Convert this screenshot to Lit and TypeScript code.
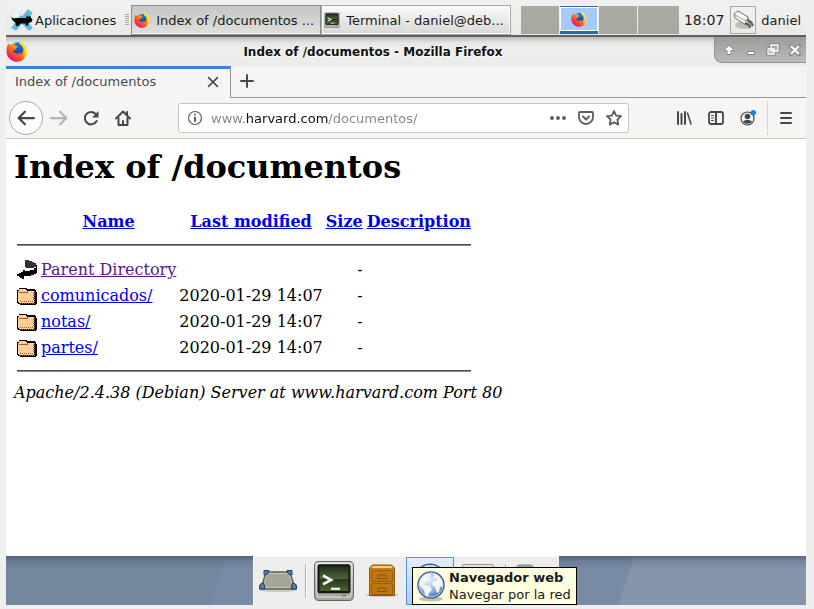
import { LitElement, html, svg, css } from "lit";
import { customElement, property } from "lit/decorators.js";
import { styleMap } from "lit/directives/style-map.js";

const firefoxIcon = (size: number, id: string) => html`
  <svg width=${size} height=${size} viewBox="0 0 24 24" aria-hidden="true">
    <defs>
      <linearGradient id=${"f" + id} x1="0.85" y1="0.1" x2="0.2" y2="0.9">
        <stop offset="0" stop-color="#ffe226" />
        <stop offset="0.4" stop-color="#ff9a16" />
        <stop offset="0.7" stop-color="#ff4b2b" />
        <stop offset="1" stop-color="#e3157e" />
      </linearGradient>
      <linearGradient id=${"g" + id} x1="0" y1="0" x2="0" y2="1">
        <stop offset="0" stop-color="#0a8bea" />
        <stop offset="1" stop-color="#332a85" />
      </linearGradient>
    </defs>
    <circle cx="12.5" cy="10.8" r="8.3" fill=${`url(#g${id})`} />
    <path fill=${`url(#f${id})`}
      d="M3 3.2C3.200 4.300 3.600 5 4.300 5.500 5.200 5 6.500 5 7.500 5.200 8.500 4.200 9.700 3.500 11 3.400 10.200 4 9.700 4.700 9.600 5.700c1 1 2.900.8 3.400 1.300-.1.900-1.900 1.500-2.400 2.100-.2.800.1 1.500-.5 1.900-1 .1-1.800-.2-2.600.3.500 2.700 3.500 4.400 6.200 3.300 1-.4 1.700-.8 2.800-.4-.7 1.200-2 2.100-3.400 2.200 3.700.1 6.200-3 5.700-6.600C18.500 7.500 17.300 5.700 15.500 5c-1-.5-.2-3.500.9-4.600.8 1.800 2.500 2.400 3.900 4.400 2.700 2.800 3.500 6.900 2.300 10.700C21 20.500 16.800 23.800 12 23.800 5.800 23.800.6 18.800.5 12.500.4 8.800 1.300 5.500 3 3.200z" />
    <path fill="#ffe54a" opacity="0.8" d="M16.400.4c.8 1.800 2.500 2.400 3.900 4.400 2.700 2.800 3.500 6.900 2.300 10.700-.7 2-1.900 3.900-3.500 5.400 1.900-4 2-8.400.2-11.900C18.500 7.500 17.300 5.700 15.500 5c-1-.5-.2-3.500.9-4.600z" />
  </svg>`;

const xfceIcon = html`
  <svg width="24" height="24" viewBox="0 0 24 24" aria-hidden="true">
    <path d="M6 1l6 7 6-7 5 4-6 7 6 8-4 3-7-7-6 7-5-3 6-8-6-7z" fill="#5fb4e0" stroke="#b9e0f4" />
    <path d="M6 1l5 6-5 5-5-7z" fill="#eaf5fb" />
    <path d="M1.500 8.500C3 11 4 10.500 6 10h10l1-2.500 1.500 1.500 2-1.500.5 2.500 1.500 1.500-1 2.500-3 1-.5 2.500h-2l-.5-2h-5l-2 2.500H6l-.5-3-2-2C2 12 1.500 10.500 1.500 8.500z" fill="#050505" />
  </svg>`;

const terminalIcon = (size: number, id: string) => html`
  <svg width=${size} height=${size} viewBox="0 0 40 36" preserveAspectRatio="none" aria-hidden="true">
    <defs>
      <linearGradient id=${"t" + id} x1="0" y1="0" x2="0" y2="1">
        <stop offset="0" stop-color="#202d1c" />
        <stop offset="0.5" stop-color="#4b6436" />
        <stop offset="0.52" stop-color="#26371f" />
        <stop offset="1" stop-color="#4d6632" />
      </linearGradient>
      <linearGradient id=${"b" + id} x1="0" y1="0" x2="0" y2="1">
        <stop offset="0" stop-color="#dadad7" />
        <stop offset="1" stop-color="#a2a29d" />
      </linearGradient>
    </defs>
    <rect x="0.500" y="0.500" width="39" height="35" rx="4" fill=${`url(#b${id})`} stroke="#686864" />
    <rect x="3" y="2.500" width="34" height="30" rx="2" fill="none" stroke="#efefed" opacity="0.7" />
    <rect x="4.500" y="4" width="31" height="24" rx="1" fill=${`url(#t${id})`} stroke="#151713" stroke-width="2" />
    <path d="M9 13l8 4-8 4" fill="none" stroke="#f4f6ee" stroke-width="2.500" />
    <path d="M17 25h9" stroke="#f4f6ee" stroke-width="2" />
    <path d="M28 31h4" stroke="#6d9a40" stroke-width="2" />
  </svg>`;

const globeIcon = (width: number, height: number, id: string) => html`
  <svg width=${width} height=${height} viewBox="0 0 30 32" aria-hidden="true">
    <defs>
      <radialGradient id=${id} cx="0.4" cy="0.3" r="0.75">
        <stop offset="0" stop-color="#e9f1fa" />
        <stop offset="0.6" stop-color="#8fb3dc" />
        <stop offset="1" stop-color="#3e6ba8" />
      </radialGradient>
    </defs>
    <ellipse cx="15" cy="29" rx="12" ry="2.500" fill="#777" opacity="0.45" />
    <circle cx="15" cy="15" r="13" fill=${`url(#${id})`} stroke="#405f9a" stroke-width="1.500" />
    <path d="M4 10l4-5 5-2 2 2-2 2 2 2-4 1-1 3-3 1 3 1 4 1 2 4-3 3-1 4-3-2-1-5-3-3-2-3zM18 3l5 3 3 5 1 5-3 1-1 5-2 1-2-6-3-2 1-4 4-1-2-2-3 1 2-3z" fill="#f4f5ef" />
    <circle cx="15" cy="15" r="12" fill="none" stroke="#d8e6f6" opacity="0.8" />
  </svg>`;

const desktopIcon = html`
  <svg width="40" height="24" viewBox="0 0 40 24" aria-hidden="true">
    <ellipse cx="20" cy="21" rx="19" ry="2" fill="#888" opacity="0.35" />
    <path d="M8 3h24l5 17H3z" fill="#a5a896" stroke="#5d6155" stroke-width="1.500" />
    <path d="M9 4.500h22l4 14H5z" fill="none" stroke="#c5c8b8" />
    <path d="M6 1.500h5l-1 3-3 2-1-1zM34 1.500h-5l1 3 3 2 1-1zM2.500 15l3-1 1 3v3h-5v-3zM37.500 15l-3-1-1 3v3h5v-3z" fill="#5479a8" stroke="#233f68" />
  </svg>`;

const cabinetIcon = html`
  <svg width="32" height="34" viewBox="0 0 32 34" aria-hidden="true">
    <ellipse cx="16" cy="31" rx="16" ry="2" fill="#777" opacity="0.35" />
    <path d="M3.500 31.500V4l3-3h19l3 3v27.500z" fill="#c78013" stroke="#8a5a12" />
    <path d="M5 4l2-2h18l2 2z" fill="#f0cf8e" />
    <rect x="5.500" y="6.500" width="21" height="11" rx="1" fill="#bd7610" stroke="#915c0d" />
    <rect x="5.500" y="19.500" width="21" height="11" rx="1" fill="#bd7610" stroke="#915c0d" />
    <path d="M12 14v-3h8v3M11 14.500h10M12 27v-3h8v3M11 27.500h10" fill="none" stroke="#8a560b" />
  </svg>`;

const finderIcon = html`
  <svg width="32" height="34" viewBox="0 0 32 34" aria-hidden="true">
    <rect x="0.500" y="0.500" width="31" height="32" rx="1" fill="#d2d2cf" stroke="#999995" />
    <path d="M2 2h28" stroke="#f5f5f3" />
  </svg>`;

const folderDockIcon = html`
  <svg width="38" height="34" viewBox="0 0 38 34" aria-hidden="true">
    <path d="M1.500 33V3l2-2h13l2 2v3h16v27z" fill="#a3a3a0" stroke="#858582" />
  </svg>`;

const plugIcon = html`
  <svg width="22" height="24" viewBox="0 0 22 24" aria-hidden="true">
    <ellipse cx="12" cy="17" rx="9" ry="4" fill="#888" opacity="0.45" />
    <path d="M2 6l4-3 10 6 1 6-3 2L3 10z" fill="#f7f7f4" stroke="#74746e" />
    <path d="M3 7l11 6 2-4M14 13v4" fill="none" stroke="#a9a9a3" />
    <path d="M15 12l4 2 2 4M13 15l4 2 1 3" fill="none" stroke="#595955" stroke-width="2" />
  </svg>`;

const stroke = (size: number, body: unknown) => html`
  <svg width=${size} height=${size} viewBox="0 0 16 16" fill="none" stroke="currentColor" stroke-width="2"
    stroke-linecap="round" stroke-linejoin="round" aria-hidden="true">${body}</svg>`;

const icons = {
  back: stroke(18, svg`<path d="M15 8H2M7 2.500L1.500 8 7 13.500" />`),
  forward: stroke(18, svg`<path d="M1 8h13M9 2.500L14.500 8 9 13.500" />`),
  reload: stroke(16, svg`<path d="M13.600 11A6.200 6.200 0 1 1 12.500 3.800" /><path d="M15.500 1v6.500H9z" fill="currentColor" stroke="none" />`),
  home: stroke(16, svg`<path d="M1 8.500L8 1.500l7 7" /><path d="M3.500 8v7h9V8" /><path d="M8 15v-4M12 2v3" />`),
  info: stroke(16, svg`<circle cx="8" cy="8" r="6.500" stroke-width="1.200" /><path d="M8 7.500v3.500M8 4.500v.1" />`),
  dots: stroke(16, svg`<path d="M2 8h.01M8 8h.01M14 8h.01" stroke-width="3.800" />`),
  pocket: stroke(16, svg`<path d="M2 2h12q1 0 1 1v4a7 7 0 0 1-14 0V3q0-1 1-1z" stroke-width="1.800" /><path d="M5 6.500l3 3 3-3" />`),
  star: stroke(16, svg`<path d="M8 1l2.100 4.600 4.900.6-3.600 3.400.9 5L8 12.200l-4.300 2.400.9-5L1 6.200l4.900-.6z" stroke-width="1.800" />`),
  library: stroke(16, svg`<path d="M2 2v12M5.500 4v10M9 2v12" /><path d="M11.500 3l3.500 11" stroke-width="1.500" />`),
  sidebar: stroke(16, svg`<rect x="1" y="2" width="14" height="12" rx="2" stroke-width="1.800" /><path d="M8 2v12" /><path d="M3.500 5.500h2M3.500 8h2M3.500 10.500h2" stroke-width="1" />`),
  account: stroke(16, svg`<circle cx="7.500" cy="8.500" r="6.500" stroke-width="1.200" /><circle cx="7.500" cy="6.500" r="2.800" fill="currentColor" stroke="none" /><path d="M3 11.500c2-2 7-2 9 0-1.500 3-7.500 3-9 0z" fill="currentColor" stroke="none" /><circle cx="13.300" cy="2.700" r="2.700" fill="#0a84ff" stroke="none" />`),
  menu: stroke(16, svg`<path d="M3 3h10M3 8h10M3 13h10" />`),
  close: stroke(14, svg`<path d="M3 3l10 10M13 3L3 13" stroke-width="1.800" />`),
  plus: stroke(16, svg`<path d="M8 2v12M2 8h12" />`),
};

const windowGlyph = (body: unknown) => html`
  <svg width="14" height="14" viewBox="0 0 14 14" aria-hidden="true">${body}</svg>`;

const windowButtons = [
  { label: "Enrollar", icon: windowGlyph(svg`<path d="M7 2L2.500 6.500v1H5v4h4v-4h2.500v-1z" fill="#fff" stroke="#84847f" />`) },
  { label: "Minimizar", icon: windowGlyph(svg`<path d="M3.500 8.500h7v3h-7z" fill="#fff" stroke="#84847f" />`) },
  { label: "Maximizar", icon: windowGlyph(svg`<path d="M5 2h7v6H5zM2 6h6v5H2z" fill="#aaa9a7" stroke="#7c7c78" stroke-width="3" /><path d="M5 2h7v6H5zM2 6h6v5H2z" fill="#aaa9a7" stroke="#fff" stroke-width="1.300" />`) },
  { label: "Cerrar", icon: windowGlyph(svg`<path d="M3 3l8 8M11 3l-8 8" stroke="#858581" stroke-width="4" stroke-linecap="round" /><path d="M3 3l8 8M11 3l-8 8" stroke="#fff" stroke-width="2.200" />`) },
];

const parentIcon = html`
  <svg width="20" height="22" viewBox="0 0 20 22" shape-rendering="crispEdges" aria-hidden="true">
    <path d="M8 1h4v1h3v1h2v1h2v4h-2v1H9V8H8z" fill="#333" />
    <path d="M20 6v8h-1v1h-2v1h-3v1H7v3H5v-1H3v-1H2v-1H0v-2h2v-1h2v-1h2v-2h2v1h5v-1h4V9h2V6z" fill="#000" />
  </svg>`;

const folderIcon = html`
  <svg width="20" height="22" viewBox="0 0 20 22" shape-rendering="crispEdges" aria-hidden="true">
    <path d="M2 3h8v1h8v1h1v2h1v12h-1v1H3v-1H1v-1H0V5h2z" fill="#000" />
    <path d="M2 4h7v1h1v1h7v12H2v-1H1V6h1z" fill="#ffcc99" />
    <path d="M3 16.500h14M16.500 8v8M17.500 6v12M3 18.500h15" fill="none" stroke="#996633" stroke-dasharray="1 1" />
    <path d="M2 7.500h8V6" fill="none" stroke="#996633" />
  </svg>`;

interface Entry { name: string; href: string; modified: string; up?: boolean }

const entries: Entry[] = [
  { name: "Parent Directory", href: "#parent", modified: "", up: true },
  { name: "comunicados/", href: "#comunicados", modified: "2020-01-29 14:07" },
  { name: "notas/", href: "#notas", modified: "2020-01-29 14:07" },
  { name: "partes/", href: "#partes", modified: "2020-01-29 14:07" },
];

const reset = css`
  *, *::before, *::after { box-sizing: border-box; }
  button { font: inherit; color: inherit; background: none; border: 0; padding: 0; margin: 0; display: flex; align-items: center; justify-content: center; }
  svg { display: block; flex: none; }
`;

@customElement("desktop-panel")
export class DesktopPanel extends LitElement {
  static styles = [reset, css`
    :host { display: block; }
    .panel { display: flex; height: 30px; background: linear-gradient(#f1f1f0, #e9e9e8); color: #1b1b1b; }
    .apps { gap: 1px; padding: 0 0 0 4px; }
    .grip { width: 4px; height: 12px; margin: 9px 2px 0 9px; background: repeating-linear-gradient(#a5a5a2 0 1px, #f4f4f3 1px 2px); }
    .task { width: 190px; flex: 0 1 190px; min-width: 0; height: 30px; padding: 0 2px 0 2px; gap: 6px; justify-content: flex-start; border: 1px solid #a7a7a2; box-shadow: inset 0 0 0 1px #fdfdfd; background: linear-gradient(#fafafa, #d8d8d6); }
    .task.active { background: linear-gradient(#c6c6c4, #dfdfdd); border-color: #8f8f8c; box-shadow: inset 0 -1px #fff; }
    .text { overflow: hidden; text-overflow: ellipsis; white-space: nowrap; }
    .pager { display: flex; gap: 1px; margin-left: auto; }
    .cell { width: 38px; height: 28px; margin-top: 1px; background: #a9a9a2; }
    .cell.last { width: 41px; }
    .cell.current { background: #a5cbfb; border: solid #3465a4; border-width: 1px 0 3px; box-shadow: inset 0 0 0 1px #fff; }
    .clock { align-self: center; margin: 0 6px 0 5px; font-size: 14px; }
    .plug { width: 26px; height: 28px; margin: 1px 5px 0 0; border: 1px solid #a9aaa0; }
    .user { padding-right: 5px; }
  `];

  render() {
    return html`
      <header class="panel">
        <button class="apps">${xfceIcon}<span>Aplicaciones</span></button>
        <span class="grip"></span>
        <button class="task active">${firefoxIcon(16, "task")}<span class="text">Index of /documentos ...</span></button>
        <button class="task">${terminalIcon(16, "task")}<span class="text">Terminal - daniel@deb...</span></button>
        <div class="pager">
          <button class="cell" aria-label="Área 1"></button>
          <button class="cell current" aria-label="Área 2">${firefoxIcon(16, "pager")}</button>
          <button class="cell" aria-label="Área 3"></button>
          <button class="cell last" aria-label="Área 4"></button>
        </div>
        <time class="clock">18:07</time>
        <button class="plug" aria-label="Energía">${plugIcon}</button>
        <button class="user">daniel</button>
      </header>`;
  }
}

@customElement("address-bar")
export class AddressBar extends LitElement {
  @property() subdomain = "www.";
  @property() domain = "harvard.com";
  @property() path = "/documentos/";

  static styles = [reset, css`
    :host { display: block; flex: 1; min-width: 0; }
    .bar { display: flex; align-items: center; height: 30px; padding: 0 6px 0 8px; background: #fff; border: 1px solid #c9c6c0; border-radius: 3px; color: #5b5b5d; }
    .url { flex: 1; min-width: 0; height: 26px; margin: 0 8px; padding: 0; border: 0; outline: 0; font: inherit; color: transparent; caret-color: #111; background-clip: text; -webkit-background-clip: text; }
    .actions { display: flex; gap: 12px; }
  `];

  private measure(text: string) {
    const context = document.createElement("canvas").getContext("2d")!;
    context.font = '13px "DejaVu Sans"';
    return Math.round(context.measureText(text).width);
  }

  render() {
    const start = this.measure(this.subdomain);
    const end = this.measure(this.subdomain + this.domain);
    const tint = { backgroundImage: `linear-gradient(90deg, #858585 ${start}px, #0c0c0d ${start}px ${end}px, #858585 ${end}px)` };
    return html`
      <div class="bar">
        ${icons.info}
        <input class="url" type="text" aria-label="Dirección" style=${styleMap(tint)} .value=${this.subdomain + this.domain + this.path} />
        <div class="actions">
          <button aria-label="Acciones de página">${icons.dots}</button>
          <button aria-label="Guardar en Pocket">${icons.pocket}</button>
          <button aria-label="Marcar página">${icons.star}</button>
        </div>
      </div>`;
  }
}

@customElement("browser-window")
export class BrowserWindow extends LitElement {
  static styles = [reset, css`
    :host { display: flex; flex-direction: column; }
    .titlebar { display: flex; height: 31px; border-top: 2px solid #5f5f5f; background: linear-gradient(#bcbcbb, #e6e6e5 6px, #ededec 12px, #ebebea); }
    .logo { padding-top: 3px; }
    .title { flex: 1; margin: 0; padding-left: 4px; font-size: 12px; line-height: 30px; text-align: center; color: #111; text-shadow: 1px 1px #fff; }
    .controls { display: flex; align-items: center; gap: 8px; height: 26px; padding: 0 4px 0 7px; background: linear-gradient(#9b9b9a, #bcbbba); border: solid #92928f; border-width: 0 0 1px 1px; border-bottom-left-radius: 8px; }
    .tabs { display: flex; height: 32px; background: #f5f4f3; color: #4a4a4b; }
    .tab { display: flex; align-items: center; width: 225px; border-top: 3px solid #3584e4; border-right: 1px solid #979797; padding: 0 10px 4px 9px; background: #f6f5f4; }
    .tab-label { flex: 1; justify-content: flex-start; }
    .rest { flex: 1; display: flex; padding: 0 8px 2px; border-bottom: 1px solid #979797; }
    .toolbar { display: flex; align-items: center; height: 41px; padding: 0 3px; background: #f6f5f4; border-bottom: 1px solid #c9c6c2; color: #45484b; }
    .back { width: 34px; height: 34px; border: 1px solid #a8a8a8; border-radius: 50%; background: #fdfdfd; }
    .nav { width: 32px; height: 32px; }
    .disabled { color: #b4b4b4; }
    .address { margin: 0 39px 0 39px; }
    .menu { width: 36px; height: 34px; border-left: 1px solid #d9d8d7; margin-left: 3px; }
    .page { flex: 1; padding: 10px 8px 8px; background: #fff; font-family: "DejaVu Serif", serif; font-size: 16px; line-height: 20px; color: #000; }
    h1 { margin: 0 0 21px; font-size: 32px; line-height: 37px; }
    table { border-spacing: 2px; }
    th, td { padding: 2px 1px 0; height: 24px; vertical-align: middle; white-space: nowrap; }
    th:nth-child(3), td:nth-child(3) { padding: 2px 0 0; }
    a { color: #0000ee; }
    a.visited { color: #551a8b; }
    hr { margin: 8px 0; border: 0; height: 2px; background: linear-gradient(#4b4b4b 1px, #8a8a8a 1px); }
    .rule { height: 20px; padding: 1px; }
    .size { text-align: right; }
    address { display: block; }
  `];

  render() {
    return html`
      <div class="titlebar">
        <span class="logo">${firefoxIcon(22, "title")}</span>
        <h2 class="title">Index of /documentos - Mozilla Firefox</h2>
        <div class="controls">${windowButtons.map((b) => html`<button aria-label=${b.label}>${b.icon}</button>`)}</div>
      </div>
      <div class="tabs">
        <div class="tab"><button class="tab-label">Index of /documentos</button><button aria-label="Cerrar pestaña">${icons.close}</button></div>
        <div class="rest"><button aria-label="Nueva pestaña">${icons.plus}</button></div>
      </div>
      <nav class="toolbar">
        <button class="back" aria-label="Atrás">${icons.back}</button>
        <button class="nav disabled" aria-label="Adelante" disabled>${icons.forward}</button>
        <button class="nav" aria-label="Recargar">${icons.reload}</button>
        <button class="nav" aria-label="Inicio">${icons.home}</button>
        <address-bar class="address"></address-bar>
        <button class="nav" aria-label="Biblioteca">${icons.library}</button>
        <button class="nav" aria-label="Barra lateral">${icons.sidebar}</button>
        <button class="nav" aria-label="Cuenta">${icons.account}</button>
        <button class="menu" aria-label="Menú">${icons.menu}</button>
      </nav>
      <main class="page">
        <h1>Index of /documentos</h1>
        <table>
          <thead>
            <tr>
              <th></th>
              <th><a href="#name">Name</a></th>
              <th><a href="#modified">Last modified</a></th>
              <th><a href="#size">Size</a></th>
              <th><a href="#description">Description</a></th>
            </tr>
          </thead>
          <tbody>
            <tr><td class="rule" colspan="5"><hr /></td></tr>
            ${entries.map((e) => html`
              <tr>
                <td>${e.up ? parentIcon : folderIcon}</td>
                <td><a class=${e.up ? "visited" : ""} href=${e.href}>${e.name}</a></td>
                <td>${e.modified}</td>
                <td class="size">-</td>
                <td></td>
              </tr>`)}
            <tr><td class="rule" colspan="5"><hr /></td></tr>
          </tbody>
        </table>
        <address>Apache/2.4.38 (Debian) Server at www.harvard.com Port 80</address>
      </main>`;
  }
}

@customElement("desktop-dock")
export class DesktopDock extends LitElement {
  static styles = [reset, css`
    :host { display: block; }
    .wallpaper { display: flex; justify-content: center; height: 49px; background: linear-gradient(#3a485c99, #3a485c33 5px, transparent 14px), linear-gradient(108deg, #73879f 0 27%, #788ba4 27% 77%, #8595ac 77%); }
    .dock { display: flex; position: relative; padding-right: 1px; background: #ededec; border-top: 1px solid #fafafa; border-left: 1px solid #fafafa; }
    .launcher { width: 48px; height: 48px; }
    .launcher.hover { background: linear-gradient(#e4edf8, #a9cdf8); border: 1px solid #5294e2; }
    .sep { width: 8px; height: 34px; margin-top: 7px; background: linear-gradient(90deg, transparent 3px, #b5b5b2 3px 4px, #fff 4px 5px, transparent 5px); }
    .tip { position: absolute; left: 158px; top: 10px; display: flex; align-items: center; gap: 3px; min-width: 165px; height: 38px; padding: 0 2px 0 3px; background: #ffffdf; border: 1px solid #000; white-space: nowrap; line-height: 17px; color: #1a1a1a; }
    .tip-text { display: flex; flex-direction: column; }
  `];

  render() {
    return html`
      <footer class="wallpaper">
        <div class="dock">
          <button class="launcher" aria-label="Mostrar escritorio">${desktopIcon}</button>
          <span class="sep"></span>
          <button class="launcher" aria-label="Terminal">${terminalIcon(40, "dock")}</button>
          <button class="launcher" aria-label="Archivos">${cabinetIcon}</button>
          <button class="launcher hover" aria-label="Navegador">${globeIcon(36, 38, "globe-dock")}</button>
          <button class="launcher" aria-label="Buscador">${finderIcon}</button>
          <span class="sep"></span>
          <button class="launcher" aria-label="Carpeta">${folderDockIcon}</button>
          <div class="tip" role="tooltip">
            ${globeIcon(30, 32, "globe-tip")}
            <span class="tip-text"><strong>Navegador web</strong><span>Navegar por la red</span></span>
          </div>
        </div>
      </footer>`;
  }
}

@customElement("app-root")
export class AppRoot extends LitElement {
  static styles = css`
    :host { display: flex; flex-direction: column; box-sizing: border-box; min-height: 100vh; padding: 5px 8px 4px 6px; background: #efefef; font-family: "DejaVu Sans", sans-serif; font-size: 13px; }
    .window { flex: 1; }
  `;

  render() {
    return html`
      <desktop-panel></desktop-panel>
      <browser-window class="window"></browser-window>
      <desktop-dock></desktop-dock>`;
  }
}
